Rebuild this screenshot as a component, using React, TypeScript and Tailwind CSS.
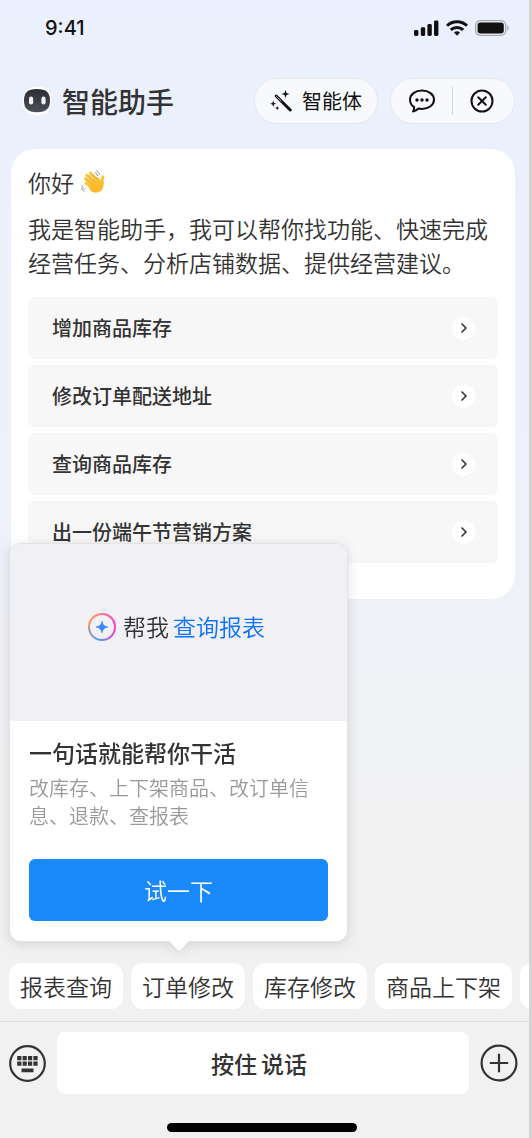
import React from 'react';
import { ChevronRight } from 'lucide-react';

const suggestions = ['增加商品库存', '修改订单配送地址', '查询商品库存', '出一份端午节营销方案'];
const shortcuts = ['报表查询', '订单修改', '库存修改', '商品上下架'];

const StatusBar: React.FC = () => (
  <div className="flex h-14 items-center justify-between pl-[45px] pr-5 text-[#111]">
    <span className="font-['Inter',sans-serif] text-xl font-medium">9:41</span>
    <div className="flex items-center gap-[7px]">
      <svg className="h-4 w-[25px]" viewBox="0 0 25 16" fill="currentColor">
        <rect x="0" y="10" width="4.4" height="6" rx="1.4" />
        <rect x="6.8" y="7.3" width="4.4" height="8.7" rx="1.4" />
        <rect x="13.4" y="4" width="4.4" height="12" rx="1.4" />
        <rect x="20" y="0.5" width="4.4" height="15.5" rx="1.4" />
      </svg>
      <svg className="h-4 w-[22px]" viewBox="0 0 22 16" fill="none" stroke="currentColor" strokeWidth="3">
        <path d="M1 5.8a14.3 14.3 0 0 1 20 0" />
        <path d="M4.8 9.9a8.9 8.9 0 0 1 12.400 0" />
        <path d="M11 15.8l-3-3.2a4.4 4.4 0 0 1 6 0z" fill="currentColor" stroke="none" />
      </svg>
      <svg className="h-4 w-[34px]" viewBox="0 0 34 16">
        <rect x="0.7" y="0.7" width="30" height="14.6" rx="4.4" fill="none" stroke="#a5a9b2" strokeWidth="1.3" />
        <rect x="2.6" y="2.6" width="26.2" height="10.8" rx="2.6" fill="#111" />
        <path d="M32.2 5.4c2 .8 2 4.4 0 5.2z" fill="#a5a9b2" />
      </svg>
    </div>
  </div>
);

const RobotLogo: React.FC = () => (
  <svg className="h-[30px] w-[30px]" viewBox="0 0 30 30">
    <defs>
      <linearGradient id="robot" x1="0" y1="0" x2="0" y2="1">
        <stop offset="0" stopColor="#2a2d36" />
        <stop offset="1" stopColor="#4b4f5b" />
      </linearGradient>
    </defs>
    <path d="M15 .8C25.5.8 29.2 5 29.2 14.8S25.5 29.2 15 29.2.8 24.6.8 14.8 4.500.8 15 .8z" fill="#fff" />
    <path d="M15 3C24.5 3 28 6.6 28 14.6S24.5 26.200 15 26.200 2 22.600 2 14.600 5.500 3 15 3z" fill="url(#robot)" />
    <rect x="7" y="10.6" width="4.2" height="8" rx="2.1" fill="#f4f4f4" />
    <rect x="19.4" y="10.6" width="4.2" height="8" rx="2.1" fill="#f4f4f4" />
  </svg>
);

const WandIcon: React.FC = () => (
  <svg className="h-[22px] w-[22px]" viewBox="0 0 22 22" fill="#111">
    <path d="M6.2 6l14 14" stroke="#111" strokeWidth="3" strokeLinecap="round" />
    <path d="M6.400 6.200l4.800 4.800" stroke="#bbb" strokeWidth="1" strokeLinecap="round" />
    <path d="M15.500 0l1 3 3 1-3 1-1 3-1-3-3-1 3-1z" />
    <path d="M3.200 10.600l.8 2.400 2.400.8-2.400.8-.8 2.400-.8-2.400-2.400-.8 2.400-.8z" />
    <path d="M7.200 16l.6 1.500 1.500.6-1.500.6-.6 1.500-.6-1.500-1.500-.6 1.500-.6z" />
  </svg>
);

const WaveIcon: React.FC = () => (
  <svg className="h-6 w-6" viewBox="0 0 24 24" role="img" aria-label="挥手">
    <defs>
      <linearGradient id="hand" x1="0" y1="0" x2="0.4" y2="1">
        <stop offset="0" stopColor="#fbc93c" />
        <stop offset="1" stopColor="#fdb62a" />
      </linearGradient>
    </defs>
    <g fill="none" stroke="url(#hand)" strokeLinecap="round">
      <path d="M4.500 8.700l8 7.800M5.600 5l9 9M9.300 3.100l8 9" strokeWidth="3" />
      <path d="M4.900 13l6 5" strokeWidth="2.800" />
      <path d="M22 6.800c-1 2-1.500 4-.8 7" strokeWidth="2.800" />
    </g>
    <path d="M7 14l9-7.500 3.800 4 2.600 1.500c.6 4-.4 7.500-3 9.300-3.400 2.300-7.400 1.800-10.400-1.300z" fill="url(#hand)" />
    <path d="M6.300 9l5 4.900M8 5.700l5.600 5.800M11.500 4l4.500 5" fill="none" stroke="#e58f1b" strokeWidth=".7" strokeLinecap="round" />
    <path d="M14 2.600c1.400.6 2.300 1.700 2.700 3M15.500 1c1.600.6 2.600 1.800 3 3.300M1 15.500c.4 1.800 1.300 3 2.600 3.800M.4 18c.4 1.500 1.200 2.500 2.400 3.200" fill="none" stroke="#777" strokeWidth=".8" strokeLinecap="round" />
  </svg>
);

const Header: React.FC = () => (
  <header className="mt-[22px] flex items-center justify-between pl-[22px] pr-[14px]">
    <div className="flex items-center gap-[10px]">
      <RobotLogo />
      <h1 className="text-[28px] leading-9 font-medium text-[#333]">智能助手</h1>
    </div>
    <div className="flex items-center gap-3">
      <button className="flex h-[46px] items-center gap-[10px] rounded-full border border-[#e5e7eb] bg-[#f8f9fd] px-[15px] text-xl font-normal text-[#111]">
        <WandIcon />
        智能体
      </button>
      <div className="flex h-[46px] items-center rounded-full border border-[#e5e7eb] bg-[#f8f9fd] pr-1 text-[#111]">
        <button aria-label="反馈" className="flex h-full w-[61px] items-center justify-center">
          <svg className="h-6 w-7" viewBox="0 0 28 24" fill="none" stroke="currentColor" strokeWidth="2" strokeLinejoin="round">
            <path d="M14 1.500c6.700 0 12 4 12 9.200s-5.300 9.200-12 9.200c-1.300 0-2.500-.1-3.600-.4-1.400 1.500-3.200 2.600-5.300 3 .8-1.300 1.200-2.800 1.100-4.400C3.500 16.400 2 13.700 2 10.700c0-5.200 5.300-9.200 12-9.200z" />
            <g fill="currentColor" stroke="none">
              <circle cx="9" cy="11" r="1.700" />
              <circle cx="14" cy="11" r="1.700" />
              <circle cx="19" cy="11" r="1.700" />
            </g>
          </svg>
        </button>
        <span className="h-7 w-px bg-[#d3d5da]" />
        <button aria-label="关闭" className="flex h-full w-[57px] items-center justify-center">
          <svg className="h-6 w-6" viewBox="0 0 24 24" fill="none" stroke="currentColor" strokeWidth="2" strokeLinecap="round">
            <circle cx="12" cy="12" r="10.500" />
            <path d="M8.200 8.200l7.600 7.600M15.800 8.200l-7.600 7.600" />
          </svg>
        </button>
      </div>
    </div>
  </header>
);

const GuidePopup: React.FC = () => (
  <section className="absolute bottom-[58px] left-0 w-[339px] drop-shadow-[0_2px_6px_rgba(0,0,0,0.12)]">
    <div className="overflow-hidden rounded-xl border border-[#e3e3e4] bg-white">
      <div className="flex h-[177px] items-center justify-center bg-[#f1f0f5] pr-1 pb-3 text-[23px] text-[#333]">
        <svg className="mr-[7px] h-7 w-7" viewBox="0 0 28 28">
          <defs>
            <linearGradient id="ringTop" x1="0" y1="0.2" x2="1" y2="0.5">
              <stop offset="0" stopColor="#ffa052" />
              <stop offset="1" stopColor="#fb3fc0" />
            </linearGradient>
            <linearGradient id="ringBottom" x1="0" y1="0" x2="1" y2="0">
              <stop offset="0" stopColor="#a39aa8" />
              <stop offset="0.4" stopColor="#4a9cf5" />
              <stop offset="1" stopColor="#f143cb" />
            </linearGradient>
          </defs>
          <path d="M1 14a13 13 0 0 1 26 0" fill="none" stroke="url(#ringTop)" strokeWidth="2" />
          <path d="M1 14a13 13 0 0 0 26 0" fill="none" stroke="url(#ringBottom)" strokeWidth="2" />
          <path d="M14 8c1 4 2 5 6 6-4 1-5 2-6 6-1-4-2-5-6-6 4-1 5-2 6-6z" fill="#3f86f8" stroke="#3f86f8" strokeWidth=".6" />
        </svg>
        <span>帮我</span>
        <span className="ml-1 text-[#0b72ff]">查询报表</span>
      </div>
      <div className="px-[19px] pt-[15px] pb-5">
        <h2 className="text-[23px] leading-8 font-medium text-[#333]">一句话就能帮你干活</h2>
        <p className="mt-[6px] text-xl leading-7 text-[#999]">改库存、上下架商品、改订单信息、退款、查报表</p>
        <button className="mt-[29px] h-[62px] w-full rounded-md bg-[#1a89fc] text-[23px] text-white">试一下</button>
      </div>
    </div>
    <svg className="mx-auto -mt-px h-[10px] w-5" viewBox="0 0 20 10" fill="#fff">
      <path d="M0 0h20l-8.500 8.700q-1.500 1.200-3 0z" />
    </svg>
  </section>
);

const InputBar: React.FC = () => (
  <div className="mt-3 flex items-center gap-[11px] border-t border-[#dfe0e8] pt-[10px] pr-[11px] pl-[9px] text-[#333]">
    <button aria-label="键盘输入">
      <svg className="h-[37px] w-[37px]" viewBox="0 0 37 37" fill="currentColor">
        <circle cx="18.500" cy="18.500" r="17.300" fill="none" stroke="currentColor" strokeWidth="2.200" />
        <path d="M8.200 11h4.200v4.200H8.200zM13.600 11h4.200v4.200h-4.200zM19 11h4.200v4.200H19zM24.400 11h4.200v4.200h-4.200zM8.200 16.600h4.200v4.200H8.200zM13.600 16.600h4.200v4.200h-4.200zM19 16.600h4.200v4.200H19zM24.400 16.600h4.200v4.200h-4.200zM12.500 23.400h12v3.800h-12z" />
      </svg>
    </button>
    <button className="flex h-[62px] flex-1 items-center justify-center gap-1 rounded-lg bg-white pr-2 text-[23px] font-medium">
      <span>按住</span> <span>说话</span>
    </button>
    <button aria-label="更多">
      <svg className="h-[38px] w-[38px]" viewBox="0 0 38 38" fill="none" stroke="currentColor" strokeWidth="2.200">
        <circle cx="19" cy="19" r="17.400" />
        <path d="M19 9.800v18.400M9.800 19h18.400" />
      </svg>
    </button>
  </div>
);

const App: React.FC = () => {
  return (
    <div className="flex min-h-screen flex-col overflow-hidden border-r-[3px] border-[#d4d4d4] bg-linear-to-b from-[#eaf0fd] via-[#edf1fb] via-40% to-[#f1f1f1] to-75% font-['Noto_Sans_CJK_SC',sans-serif] font-[350]">
      <StatusBar />
      <Header />

      {/* Welcome card */}
      <main className="mt-[25px] mr-[14px] ml-[11px] rounded-3xl bg-white px-[17px] pt-4 pb-9 text-[#333]">
        <p className="flex items-center gap-[7px] text-[23px] leading-[34px]">
          你好 <WaveIcon />
        </p>
        <p className="mt-3 text-[23px] leading-[34px]">
          我是智能助手，我可以帮你找功能、快速完成经营任务、分析店铺数据、提供经营建议。
        </p>
        <div className="mt-[18px] flex flex-col gap-[6px]">
          {suggestions.map((item) => (
            <button key={item} className="flex h-[62px] items-center justify-between rounded-md bg-[#f7f7f7] pr-[23px] pl-6 text-xl font-medium">
              {item}
              <span className="flex h-[23px] w-[23px] items-center justify-center rounded-full bg-white">
                <ChevronRight className="h-4 w-4" strokeWidth={2.5} />
              </span>
            </button>
          ))}
        </div>
      </main>

      {/* Bottom area */}
      <footer className="mt-auto">
        <div className="relative ml-[9px]">
          <GuidePopup />
          <div className="flex gap-2 overflow-hidden">
            {shortcuts.map((item) => (
              <button key={item} className="h-[46px] shrink-0 rounded-xl bg-white px-[11px] text-[23px] text-[#333]">
                {item}
              </button>
            ))}
            <button aria-label="更多快捷指令" className="h-[46px] w-[114px] shrink-0 rounded-xl bg-white" />
          </div>
        </div>
        <InputBar />
        <div className="flex justify-center pt-[29px] pr-[6px] pb-[6px]">
          <div className="h-[9px] w-[190px] rounded-full bg-black" />
        </div>
      </footer>
    </div>
  );
};

export default App;
